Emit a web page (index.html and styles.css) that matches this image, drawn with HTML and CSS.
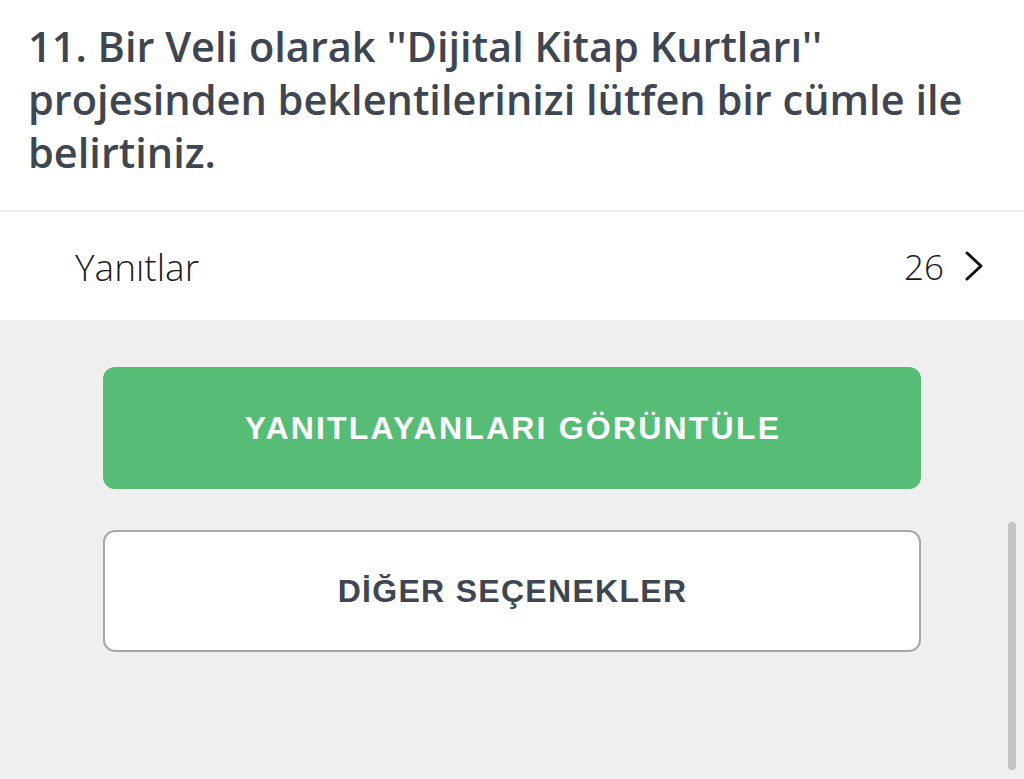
FILE: index.html
```html
<!DOCTYPE html>
<html lang="tr">
<head>
<meta charset="utf-8">
<link rel="stylesheet" href="styles.css">
</head>
<body>
<div class="page">
  <header class="question">
    <h1 class="q-title">11. Bir Veli olarak ''Dijital Kitap Kurtları'' projesinden beklentilerinizi lütfen bir cümle ile belirtiniz.</h1>
  </header>
  <div class="answers-row">
    <span class="answers-label">Yanıtlar</span>
    <span class="answers-count">26
      <svg class="chev" width="20" height="30" viewBox="0 0 20 30"><path d="M3 2 L17 15 L3 28" fill="none" stroke="#111" stroke-width="3" stroke-linecap="round" stroke-linejoin="round"/></svg>
    </span>
  </div>
  <main class="actions">
    <button class="btn btn-primary">YANITLAYANLARI GÖRÜNTÜLE</button>
    <button class="btn btn-secondary">DİĞER SEÇENEKLER</button>
  </main>
  <div class="scrollbar"></div>
</div>
</body>
</html>
```
FILE: styles.css
```css
html, body {
  margin: 0;
  padding: 0;
  height: 100%;
}
body {
  background: #efefef;
  font-family: "Open Sans", "Liberation Sans", sans-serif;
  overflow: hidden;
}
.page {
  position: relative;
  min-height: 779px;
  display: flex;
  flex-direction: column;
}
.question {
  background: #fff;
  padding: 20px 30px 31px 28px;
  border-bottom: 2px solid #ebebeb;
}
.q-title {
  margin: 0;
  font-size: 41.5px;
  line-height: 53px;
  font-weight: 600;
  color: #3d4651;
  letter-spacing: 0;
}
.answers-row {
  background: #fff;
  height: 108px;
  display: flex;
  align-items: center;
  justify-content: space-between;
  padding: 0 40px 0 75px;
}
.answers-label,
.answers-count {
  font-size: 37px;
  font-weight: 300;
  color: #1a1a1a;
  display: flex;
  align-items: center;
}
.answers-count {
  font-size: 35px;
}
.chev {
  margin-left: 20px;
}
.actions {
  display: flex;
  flex-direction: column;
  align-items: center;
  gap: 41px;
  padding-top: 47px;
}
.btn {
  width: 818px;
  height: 122px;
  border-radius: 12px;
  font-family: "Liberation Sans", Arial, sans-serif;
  font-size: 32px;
  font-weight: 700;
  cursor: pointer;
}
.btn-primary {
  background: #57bd76;
  border: none;
  color: #fff;
  letter-spacing: 2.2px;
  text-indent: 2px;
}
.btn-secondary {
  background: #fff;
  border: 2px solid #a4a8ac;
  color: #3d4651;
  letter-spacing: 1.3px;
  text-indent: 1px;
}
.scrollbar {
  position: absolute;
  left: 1008px;
  top: 522px;
  width: 8px;
  height: 248px;
  border-radius: 4px;
  background: #c4c4c4;
}
```
